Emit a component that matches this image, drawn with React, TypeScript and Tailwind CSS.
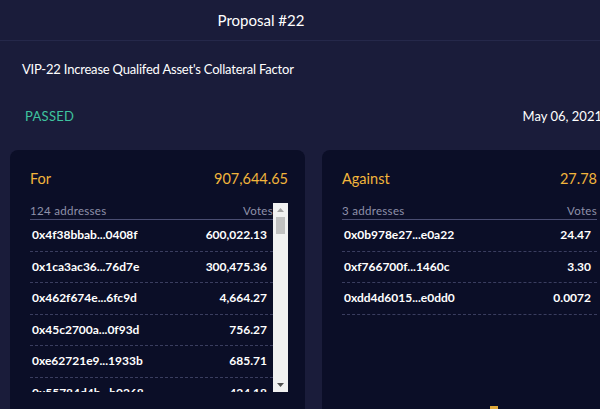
import React from "react";

const forRows: [string, string][] = [
  ["0x4f38bbab...0408f", "600,022.13"],
  ["0x1ca3ac36...76d7e", "300,475.36"],
  ["0x462f674e...6fc9d", "4,664.27"],
  ["0x45c2700a...0f93d", "756.27"],
  ["0xe62721e9...1933b", "685.71"],
  ["0x55784d4b...b0268", "424.18"],
];

const againstRows: [string, string][] = [
  ["0x0b978e27...e0a22", "24.47"],
  ["0xf766700f...1460c", "3.30"],
  ["0xdd4d6015...e0dd0", "0.0072"],
];

function Row({ a, v }: { a: string; v: string }) {
  return (
    <div className="flex items-center justify-between h-[31.5px] shrink-0 pl-[2px] pr-[6px] border-b border-dashed border-[#3a3d5f] text-[12px] font-bold text-white">
      <span>{a}</span>
      <span>{v}</span>
    </div>
  );
}

function Scrollbar() {
  return (
    <div className="w-[15px] h-full bg-[#f1f1f1] flex flex-col items-center shrink-0">
      <div className="h-[14px] w-full flex items-center justify-center">
        <svg width="7" height="4" viewBox="0 0 7 4">
          <polygon points="0,4 3.5,0 7,4" fill="#a3a3a3" />
        </svg>
      </div>
      <div className="w-[9px] h-[17px] bg-[#c1c1c1]" />
      <div className="flex-1" />
      <div className="h-[14px] w-full flex items-center justify-center">
        <svg width="7" height="4" viewBox="0 0 7 4">
          <polygon points="0,0 7,0 3.5,4" fill="#505050" />
        </svg>
      </div>
    </div>
  );
}

function Card({
  title,
  amount,
  count,
  rows,
  scroll,
}: {
  title: string;
  amount: string;
  count: string;
  rows: [string, string][];
  scroll: boolean;
}) {
  return (
    <div
      className={`w-[295px] h-[280px] shrink-0 rounded-[8px] bg-[#0b0e27] pt-[17px] pl-[20px] ${
        scroll ? "pr-[17px]" : "pr-[20px]"
      }`}
    >
      <div className="flex items-center justify-between h-[24px] text-[14.5px] text-[#f2b53c]">
        <span>{title}</span>
        <span>{amount}</span>
      </div>
      <div className="mt-[12px] h-[189px] flex">
        <div className="flex-1 min-w-0 flex flex-col overflow-hidden">
          <div className="flex items-center justify-between h-[17px] shrink-0 pb-[1px] border-b border-[#4a4d72] text-[11.5px] text-[#8f91aa] tracking-[0.3px]">
            <span>{count}</span>
            <span>Votes</span>
          </div>
          {rows.map(([a, v], i) => (
            <Row key={i} a={a} v={v} />
          ))}
        </div>
        {scroll && <Scrollbar />}
      </div>
    </div>
  );
}

export default function App() {
  return (
    <div
      className="w-[600px] h-[409px] overflow-hidden bg-[#1a1c3a] text-white"
      style={{ fontFamily: "Lato, 'Open Sans', sans-serif" }}
    >
      <div className="w-[627px]">
        <div className="h-[41px] border-b border-[#25284a] flex items-center">
          <div className="w-[522px] flex justify-center">
            <span className="text-[15px]">Proposal #22</span>
          </div>
        </div>
        <div className="pl-[22px] mt-[20px] h-[18px] flex items-center text-[13px] tracking-[-0.2px]">
          VIP-22 Increase Qualifed Asset's Collateral Factor
        </div>
        <div className="mt-[29px] h-[18px] flex items-center justify-between pl-[25px] pr-[25px] text-[13px]">
          <span className="text-[#3fc39f] tracking-[0.3px]">PASSED</span>
          <span className="text-white">May 06, 2021</span>
        </div>
        <div className="mt-[24px] flex gap-[17px] pl-[10px]">
          <Card title="For" amount="907,644.65" count="124 addresses" rows={forRows} scroll />
          <div className="relative">
            <Card title="Against" amount="27.78" count="3 addresses" rows={againstRows} scroll={false} />
            <div className="absolute left-[168px] top-[256px] w-[8px] h-[6px] bg-[#e0a93a]" />
          </div>
        </div>
      </div>
    </div>
  );
}
